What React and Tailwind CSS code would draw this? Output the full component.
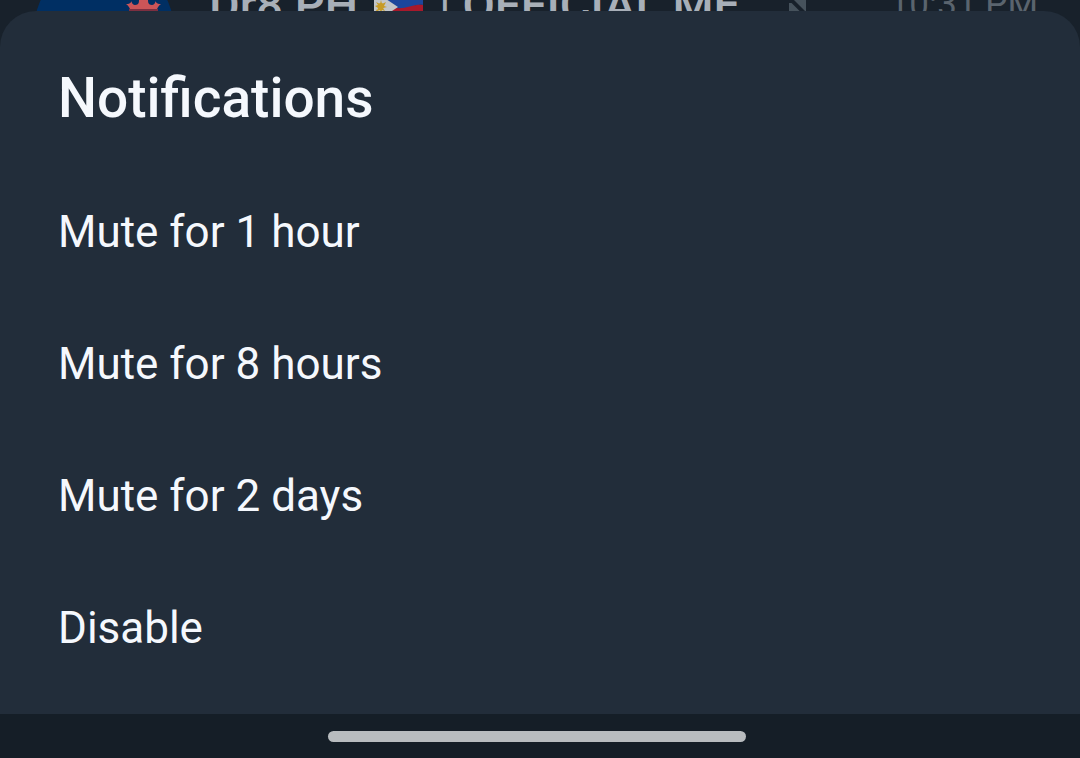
const MUTE_OPTIONS = ["Mute for 1 hour", "Mute for 8 hours", "Mute for 2 days", "Disable"];

function ChatAvatar() {
  return (
    <svg viewBox="0 0 140 140" className="ml-[34px] h-[140px] w-[140px] shrink-0" aria-hidden="true">
      <circle cx="70" cy="70" r="70" fill="#002f63" />
      {/* red crest */}
      <path
        d="M105 34h9v7c0 3 2 4 4 4s4-2 3-4c2 3 4 3 6 3-2 1-3 3-4 5H96c-1-2-2-4-4-5 2 0 4 0 6-3-1 2 1 4 3 4s4-1 4-4z"
        fill="#cb5558"
      />
      <path d="M95 49h29v4H95z" fill="#7d2f40" />
    </svg>
  );
}

function PhilippinesFlag() {
  return (
    <svg viewBox="0 -2 49 36" className="h-9 w-[49px] shrink-0" role="img" aria-label="Philippines">
      <path d="M0 2c12-4 18 3 30 2s14-3 19-2v14c-8-1-12 4-20 4S12 16 0 18z" fill="#1c469c" />
      <path d="M0 18c12-2 21 2 29 1s12-4 20-3v17c-8-2-12 2-20 2S10 31 0 34z" fill="#a8192b" />
      <path d="M0 2l24 16L0 34z" fill="#c2c5c8" />
      <g fill="#c79b25">
        <circle cx="7" cy="17" r="3" />
        <path d="M7 11l1 4 4-2-2 4 3 1-4 1 2 3-3-1-1 3-1-3-3 1 1-3-3-2 3-1-2-3 4 2z" />
        <path d="M3 20l1 2h2l-2 2 1 2-2-1-2 1 1-2-1-2h1z" />
      </g>
    </svg>
  );
}

function MutedIcon() {
  return (
    <svg viewBox="0 0 32 36" className="h-9 w-8 shrink-0" aria-hidden="true">
      <path d="M5 16h4l3 3 10 10v5l-9-7H5z" fill="#46525c" />
      <path d="M22 4v21L9 12z" fill="#46525c" />
      <path d="M7 14l19 19" stroke="#18212b" strokeWidth="2" />
    </svg>
  );
}

/* The chat list row that peeks out above the sheet */
function ChatRow() {
  return (
    <div className="h-11 overflow-hidden">
      <div className="-mt-10 flex h-[140px] items-start">
        <ChatAvatar />
        <div className="flex flex-1 items-center pt-[19px] pr-[42px] pl-[35px] leading-[52px] whitespace-nowrap text-[#a8afb8]">
          <div className="flex items-center gap-4 text-[47px] font-medium">
            <span>Dr8 PH</span>
            <PhilippinesFlag />
            <span>| OFFICIAL ME</span>
          </div>
          <div className="ml-11">
            <MutedIcon />
          </div>
          <time className="ml-auto text-[35px] text-[#5a646e]">10:31 PM</time>
        </div>
      </div>
    </div>
  );
}

export default function App() {
  return (
    <div className="flex min-h-screen flex-col overflow-hidden bg-[#18212b] font-[Roboto,sans-serif]">
      <ChatRow />

      <section
        role="dialog"
        aria-labelledby="sheet-title"
        className="relative -mt-[33px] flex-1 rounded-t-[36px] bg-[#222d3a] px-[58px] pt-[55px] pb-5 text-[#f5f8fd]"
      >
        <h2 id="sheet-title" className="text-[55px] leading-[64px] font-medium">
          Notifications
        </h2>
        <div className="mt-9 flex flex-col">
          {MUTE_OPTIONS.map((label) => (
            <button key={label} type="button" className="h-[132px] text-left text-[44px] leading-[52px]">
              {label}
            </button>
          ))}
        </div>
      </section>

      {/* System gesture bar */}
      <div className="flex h-11 justify-center bg-[#151e27] pt-[17px] pr-1.5">
        <div className="h-[11px] w-[418px] rounded-full bg-[#b8bcbf]" />
      </div>
    </div>
  );
}
